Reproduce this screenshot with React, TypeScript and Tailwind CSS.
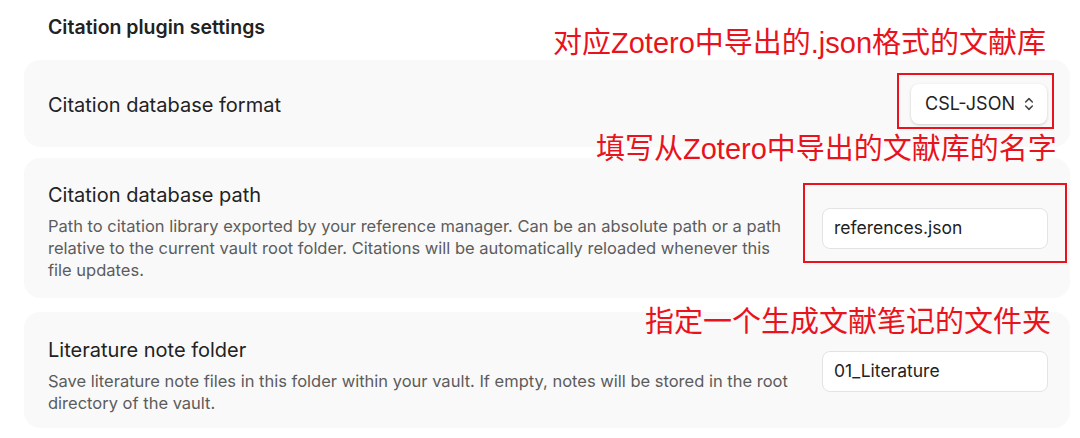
import { ChevronsUpDown } from "lucide-react";

const uiFont = { fontFamily: "Inter, 'Noto Sans', sans-serif" };

function Note({ text, className }: { text: string; className: string }) {
    return (
        <div
            className={`absolute text-[29px] leading-none text-[#e8131c] whitespace-nowrap ${className}`}
            style={{ fontFamily: "'Liberation Sans', 'Noto Sans CJK SC', sans-serif" }}
        >
            {text}
        </div>
    );
}

function TextBox({ value }: { value: string }) {
    return (
        <div className="w-[226px] h-[41px] shrink-0 flex items-center px-[11px] bg-white border border-[#e3e3e3] rounded-[8px] text-[17.5px] text-[#222]">
            {value}
        </div>
    );
}

export default function App() {
    return (
        <div className="relative w-[1080px] h-[438px] bg-white overflow-hidden" style={uiFont}>
            <div className="pl-6 pr-[10px]">
                <h2 className="pl-6 pt-[13px] h-[60px] text-[19.5px] font-semibold text-[#222]">
                    Citation plugin settings
                </h2>

                {/* database format */}
                <div className="h-[87px] rounded-[16px] bg-[#f9f9f9] flex items-center justify-between pl-6 pr-[23px]">
                    <div className="pt-[2px] text-[20px] text-[#222]">Citation database format</div>
                    <div className="w-[136px] h-[40px] flex items-center justify-between pl-[14px] pr-[10px] bg-white rounded-[8px] shadow-[0_1px_3px_rgba(0,0,0,0.18)] text-[18px] text-[#222]">
                        <span>CSL-JSON</span>
                        <ChevronsUpDown size={16} strokeWidth={2.3} className="text-[#444]" />
                    </div>
                </div>

                {/* database path */}
                <div className="mt-[11px] h-[140px] rounded-[16px] bg-[#f9f9f9] flex items-center justify-between pl-6 pr-[22px]">
                    <div className="w-[745px] pt-[7px]">
                        <div className="text-[20px] text-[#222] leading-[26px]">Citation database path</div>
                        <div className="mt-[7px] text-[16.5px] leading-[22px] text-[#5c5c5c]">
                            Path to citation library exported by your reference manager. Can be an absolute path or a path relative to the current vault root folder. Citations will be automatically reloaded whenever this file updates.
                        </div>
                    </div>
                    <TextBox value="references.json" />
                </div>

                {/* literature note folder */}
                <div className="mt-[14px] h-[116px] rounded-[16px] bg-[#f9f9f9] flex items-center justify-between pl-6 pr-[22px]">
                    <div className="w-[745px] pt-[11px]">
                        <div className="text-[20px] text-[#222] leading-[26px]">Literature note folder</div>
                        <div className="mt-[7px] text-[16.5px] leading-[22px] text-[#5c5c5c]">
                            Save literature note files in this folder within your vault. If empty, notes will be stored in the root directory of the vault.
                        </div>
                    </div>
                    <div className="pt-[3px]">
                        <TextBox value="01_Literature" />
                    </div>
                </div>
            </div>

            {/* annotations */}
            <Note text="对应Zotero中导出的.json格式的文献库" className="left-[553px] top-[29px]" />
            <div className="absolute left-[897px] top-[73px] w-[157px] h-[56px] border-2 border-[#e8131c]" />

            <Note text="填写从Zotero中导出的文献库的名字" className="left-[596px] top-[135px]" />
            <div className="absolute left-[803px] top-[183px] w-[264px] h-[80px] border-2 border-[#e8131c]" />

            <Note text="指定一个生成文献笔记的文件夹" className="left-[645px] top-[308px]" />
        </div>
    );
}
